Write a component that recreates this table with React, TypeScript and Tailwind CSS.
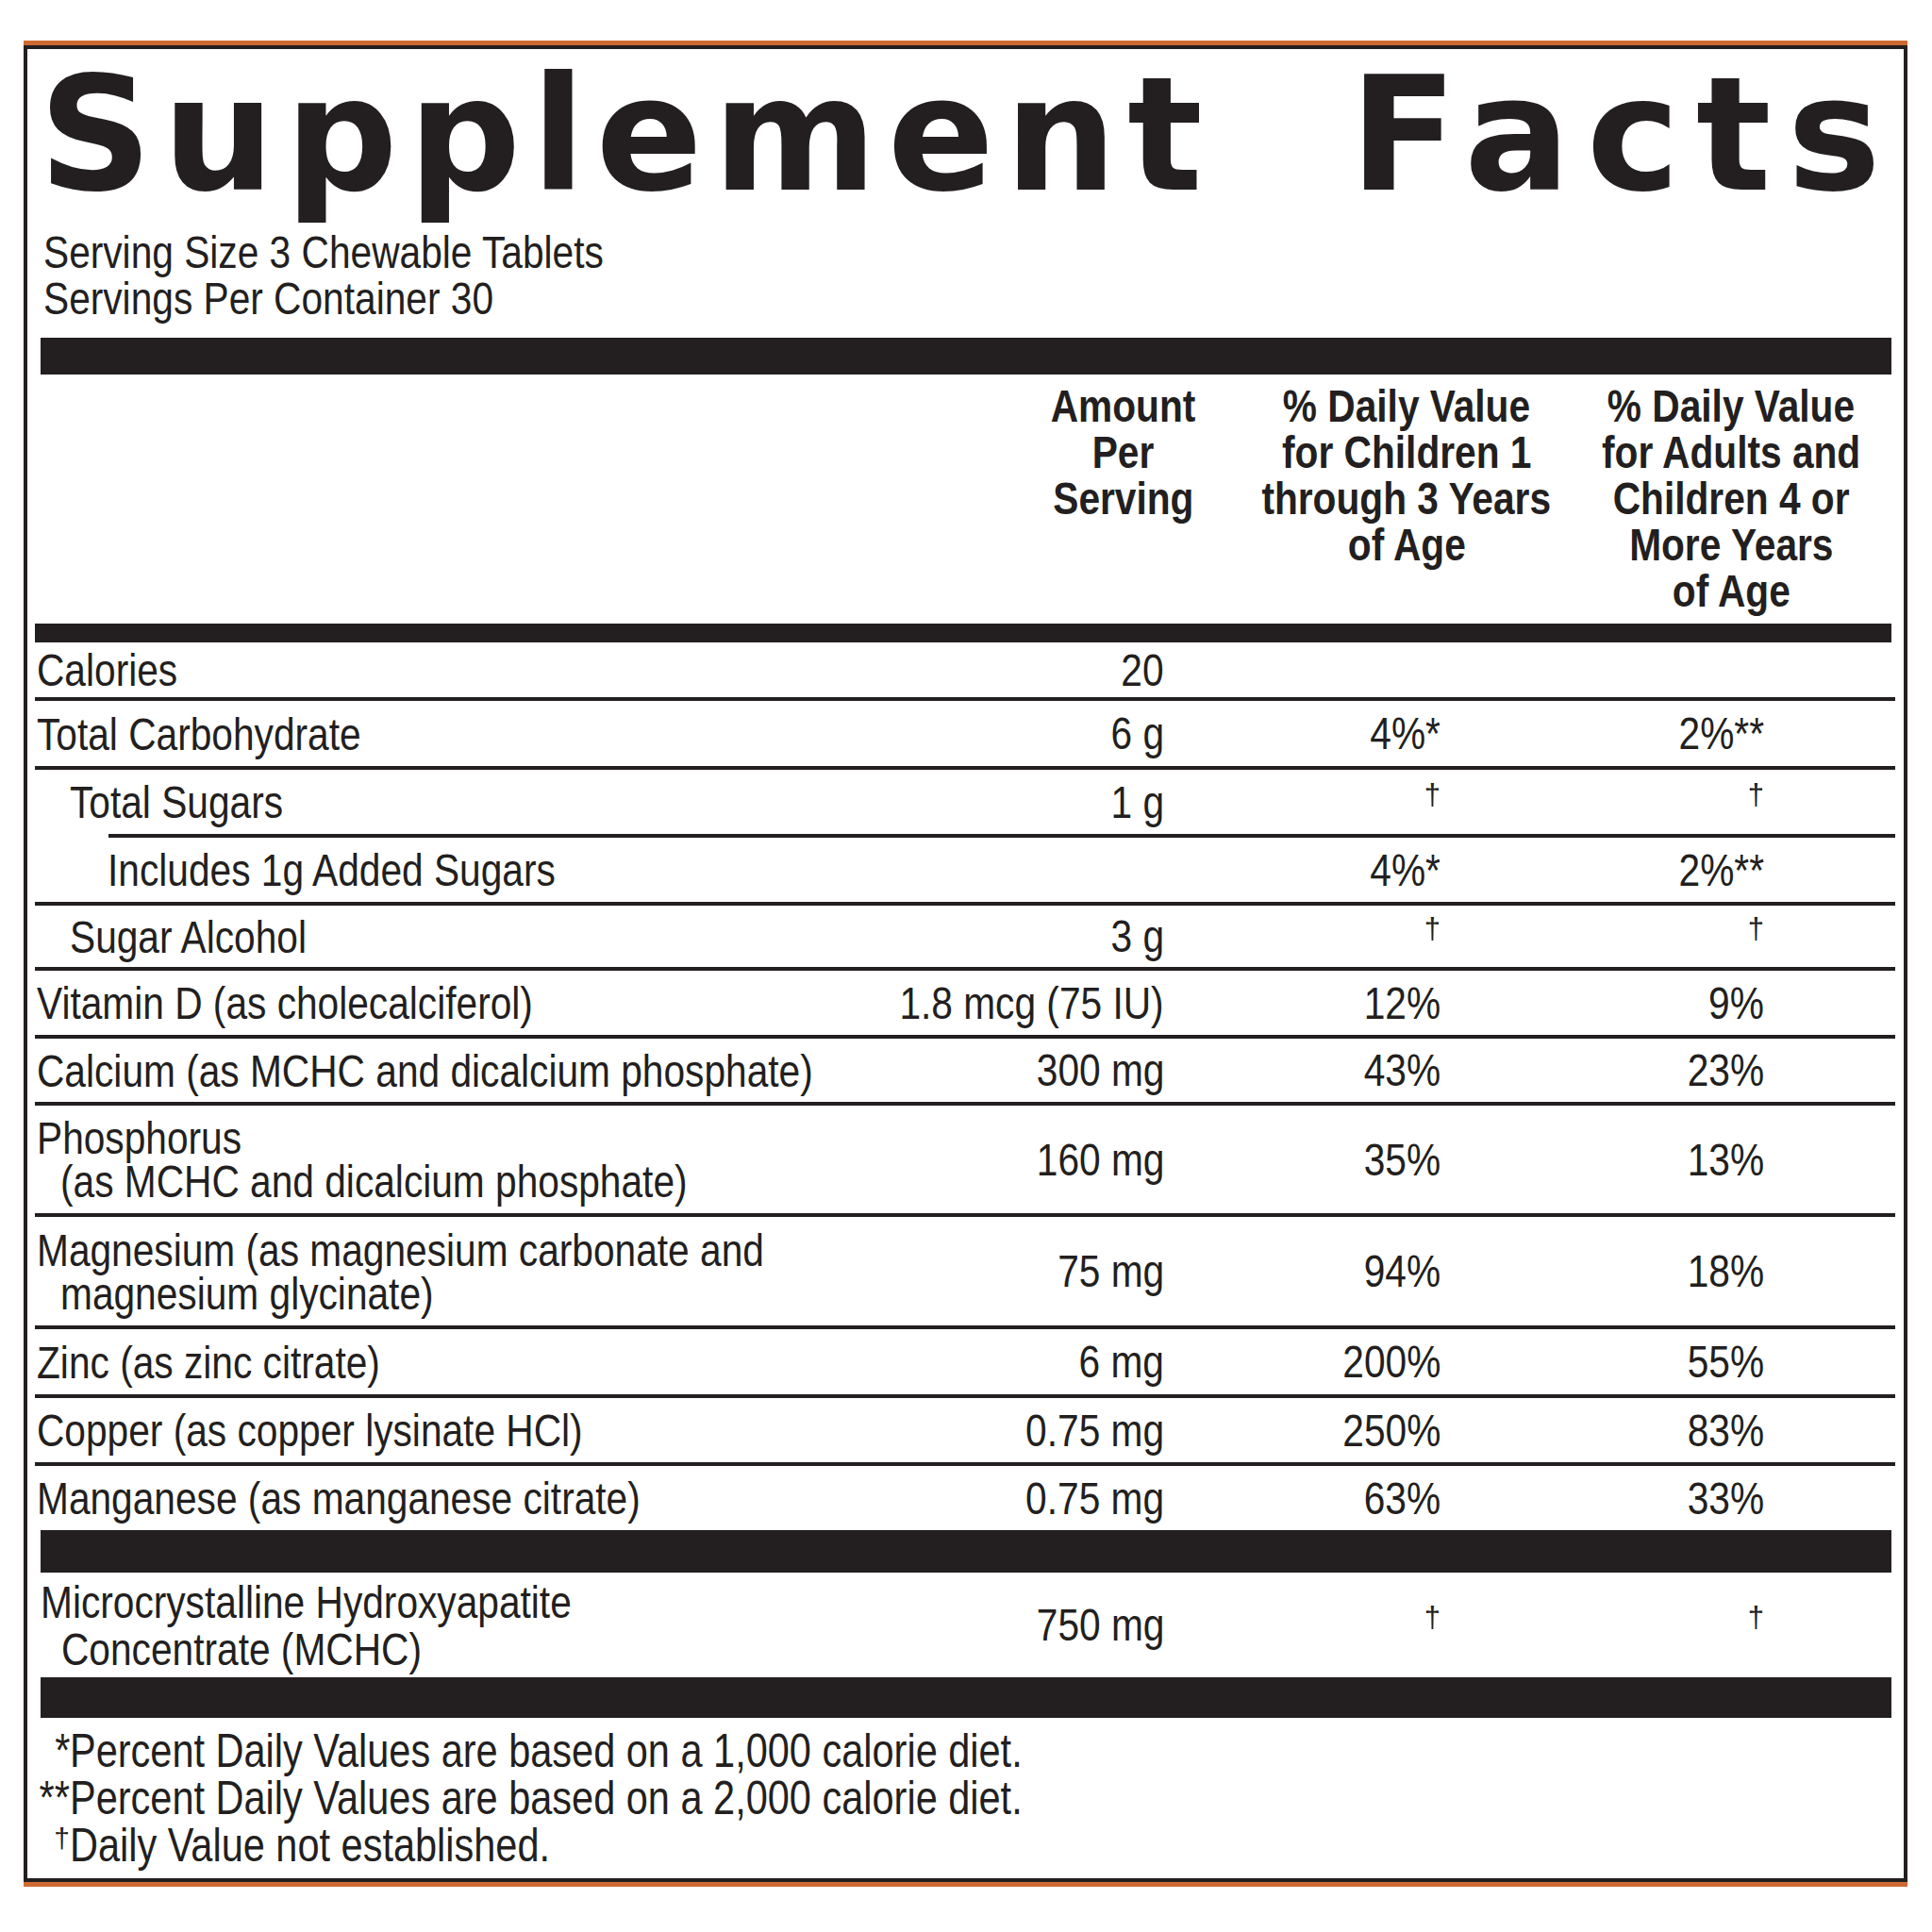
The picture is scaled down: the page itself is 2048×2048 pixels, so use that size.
import React from "react";

type Row = {
  name: string[];
  amt: string;
  c3: string;
  c4: string;
  h: string;
  pad: string;
  line?: string;
};

const rows: Row[] = [
  { name: ["Calories"], amt: "20", c3: "", c4: "", h: "h-[58px]", pad: "pl-[2px]" },
  { name: ["Total Carbohydrate"], amt: "6 g", c3: "4%*", c4: "2%**", h: "h-[69px]", pad: "pl-[2px]" },
  { name: ["Total Sugars"], amt: "1 g", c3: "†", c4: "†", h: "h-[68px]", pad: "pl-[37px]", line: "ml-[78px]" },
  { name: ["Includes 1g Added Sugars"], amt: "", c3: "4%*", c4: "2%**", h: "h-[68px]", pad: "pl-[77px]" },
  { name: ["Sugar Alcohol"], amt: "3 g", c3: "†", c4: "†", h: "h-[65px]", pad: "pl-[37px]" },
  { name: ["Vitamin D (as cholecalciferol)"], amt: "1.8 mcg (75 IU)", c3: "12%", c4: "9%", h: "h-[68px]", pad: "pl-[2px]" },
  { name: ["Calcium (as MCHC and dicalcium phosphate)"], amt: "300 mg", c3: "43%", c4: "23%", h: "h-[67px]", pad: "pl-[2px]" },
  { name: ["Phosphorus", "(as MCHC and dicalcium phosphate)"], amt: "160 mg", c3: "35%", c4: "13%", h: "h-[114px]", pad: "pl-[2px]" },
  { name: ["Magnesium (as magnesium carbonate and", "magnesium glycinate)"], amt: "75 mg", c3: "94%", c4: "18%", h: "h-[115px]", pad: "pl-[2px]" },
  { name: ["Zinc (as zinc citrate)"], amt: "6 mg", c3: "200%", c4: "55%", h: "h-[69px]", pad: "pl-[2px]" },
  { name: ["Copper (as copper lysinate HCl)"], amt: "0.75 mg", c3: "250%", c4: "83%", h: "h-[68px]", pad: "pl-[2px]" },
  { name: ["Manganese (as manganese citrate)"], amt: "0.75 mg", c3: "63%", c4: "33%", h: "h-[68px]", pad: "pl-[2px]" },
];

// condensed look: Liberation Sans squeezed horizontally
function T({ children, o = "origin-left" }: { children: React.ReactNode; o?: string }) {
  return <span className={`inline-block whitespace-nowrap scale-x-[0.83] ${o}`}>{children}</span>;
}

function Value({ v }: { v: string }) {
  if (v === "†") {
    return <span className="text-[31px] leading-none mb-[16px]">†</span>;
  }
  return <T o="origin-right">{v}</T>;
}

function NutrientRow({ row }: { row: Row }) {
  return (
    <div className={`grid grid-cols-[903px_294px_293px_343px_1fr] ${row.h}`}>
      <div className={`flex flex-col justify-center ${row.pad} leading-[46px]`}>
        {row.name.map((n, i) => (
          <div key={i} className={i > 0 ? "pl-[25px]" : ""}>
            <T>{n}</T>
          </div>
        ))}
      </div>
      <div className="flex items-center justify-end">
        <Value v={row.amt} />
      </div>
      <div className="flex items-center justify-end">
        <Value v={row.c3} />
      </div>
      <div className="flex items-center justify-end">
        <Value v={row.c4} />
      </div>
      <div />
    </div>
  );
}

function Heading({ lines }: { lines: string[] }) {
  return (
    <div className="flex flex-col items-center">
      {lines.map((l, i) => (
        <T key={i} o="origin-center">
          {l}
        </T>
      ))}
    </div>
  );
}

export default function App() {
  return (
    <div className="w-[2048px] h-[2048px] bg-white pt-[43px] pl-[25px] text-[#231f20] font-['Liberation_Sans',Arial,sans-serif]">
      <div className="w-[1997px] border-t-[5px] border-b-[5px] border-[#cf6a33]">
        <div className="h-[1947px] border-[4px] border-[#231f20] pl-[8px] pr-[9px]">
          {/* Title */}
          <div className="flex justify-between pt-[8px] pl-[4px] pr-[15px] font-['DejaVu_Sans',sans-serif] font-bold text-[167px] leading-[167px]">
            <span className="tracking-[11px]">Supplement</span>
            <span className="tracking-[17px] -mr-[17px]">Facts</span>
          </div>
          <div className="mt-[16px] pl-[9px] text-[49px] leading-[49px]">
            <div>
              <T>Serving Size 3 Chewable Tablets</T>
            </div>
            <div>
              <T>Servings Per Container 30</T>
            </div>
          </div>
          <div className="mt-[17px] ml-[6px] mr-[4px] h-[39px] bg-[#231f20]" />

          {/* Column headings */}
          <div className="grid grid-cols-[1024px_260px_340px_1fr] pt-[9px] pb-[10px] h-[264px] font-bold text-[49px] leading-[49px]">
            <div />
            <Heading lines={["Amount", "Per", "Serving"]} />
            <Heading lines={["% Daily Value", "for Children 1", "through 3 Years", "of Age"]} />
            <Heading lines={["% Daily Value", "for Adults and", "Children 4 or", "More Years", "of Age"]} />
          </div>
          <div className="mr-[4px] h-[20px] bg-[#231f20]" />

          {/* Nutrients */}
          <div className="text-[49px] leading-[49px]">
            {rows.map((row, i) => (
              <React.Fragment key={i}>
                <NutrientRow row={row} />
                {i < rows.length - 1 && (
                  <div className={`h-[4px] bg-[#231f20] ${row.line ?? ""}`} />
                )}
              </React.Fragment>
            ))}
          </div>
          <div className="ml-[6px] mr-[4px] h-[45px] bg-[#231f20]" />

          <div className="grid grid-cols-[903px_294px_293px_343px_1fr] h-[111px] text-[49px] leading-[49px]">
            <div className="flex flex-col justify-center pl-[6px] leading-[50px]">
              <div>
                <T>Microcrystalline Hydroxyapatite</T>
              </div>
              <div className="pl-[22px]">
                <T>Concentrate (MCHC)</T>
              </div>
            </div>
            <div className="flex items-center justify-end">
              <Value v="750 mg" />
            </div>
            <div className="flex items-center justify-end">
              <Value v="†" />
            </div>
            <div className="flex items-center justify-end">
              <Value v="†" />
            </div>
            <div />
          </div>
          <div className="ml-[6px] mr-[4px] h-[43px] bg-[#231f20]" />

          {/* Footnotes */}
          <div className="pt-[10px] text-[50px] leading-[50px]">
            <div className="flex">
              <span className="w-[37px] flex justify-end">
                <T o="origin-right">*</T>
              </span>
              <T>Percent Daily Values are based on a 1,000 calorie diet.</T>
            </div>
            <div className="flex">
              <span className="w-[37px] flex justify-end">
                <T o="origin-right">**</T>
              </span>
              <T>Percent Daily Values are based on a 2,000 calorie diet.</T>
            </div>
            <div className="flex">
              <span className="w-[37px] flex justify-end text-[30px] leading-[36px]">†</span>
              <T>Daily Value not established.</T>
            </div>
          </div>
        </div>
      </div>
    </div>
  );
}
